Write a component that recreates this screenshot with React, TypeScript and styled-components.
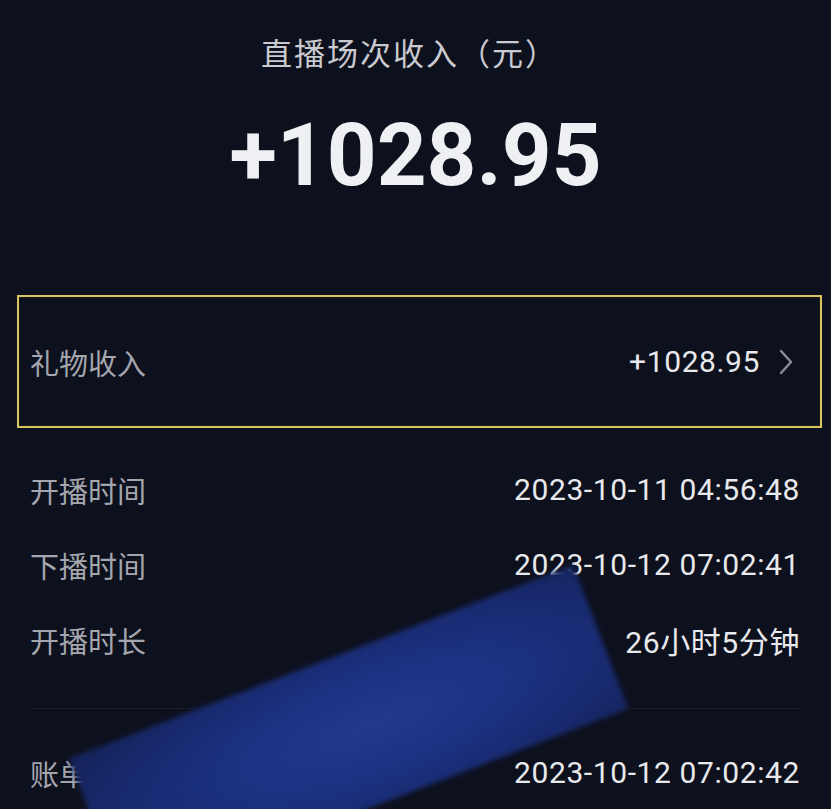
import React from 'react';
import styled, { createGlobalStyle } from 'styled-components';

const GlobalStyle = createGlobalStyle`
  html, body {
    margin: 0;
    padding: 0;
    background: #0d101d;
  }
  body {
    font-family: Roboto, "Noto Sans CJK SC", sans-serif;
  }
`;

const Page = styled.div`
  position: relative;
  width: 831px;
  height: 809px;
  overflow: hidden;
  background: #0d101d;
  padding: 0 9px 0 17px;
  box-sizing: border-box;
`;

const Header = styled.div`
  display: flex;
  flex-direction: column;
  align-items: center;
  padding: 31px 8px 0 0;
`;

const Title = styled.div`
  font-family: "Noto Sans CJK SC", sans-serif;
  font-size: 31px;
  line-height: 42px;
  color: #c9cad0;
  letter-spacing: 2px;
  margin-right: 12px;
`;

const Amount = styled.div`
  margin-top: 32px;
  font-family: Roboto, sans-serif;
  font-weight: 700;
  font-size: 87px;
  line-height: 100px;
  color: #eef0f3;
  letter-spacing: 0;
`;

const GiftBox = styled.div`
  margin-top: 90px;
  height: 133px;
  box-sizing: border-box;
  border: 2px solid #d8c460;
  box-shadow: inset 0 0 0 1px #1a1a12;
  display: flex;
  align-items: center;
  justify-content: space-between;
  padding: 0 26px 0 11px;
`;

const Label = styled.span`
  font-family: "Noto Sans CJK SC", sans-serif;
  font-size: 29px;
  color: #a4a6ae;
`;

const Value = styled.span`
  font-family: Roboto, "Noto Sans CJK SC", sans-serif;
  font-size: 30px;
  color: #e8e9ec;
  letter-spacing: 0.6px;
`;

const ValueGroup = styled.div`
  display: flex;
  align-items: center;
  gap: 18px;
`;

const List = styled.div`
  margin-top: 24px;
  padding: 0 22px 0 13px;
`;

const Row = styled.div<{ $gap?: number }>`
  height: 75px;
  display: flex;
  align-items: center;
  justify-content: space-between;
  margin-top: ${(p) => p.$gap ?? 0}px;
`;

const Divider = styled.div`
  margin-top: 31px;
  height: 1px;
  background: #181c2b;
`;

const Smudge = styled.div`
  position: absolute;
  left: ${573 - 540}px;
  top: 565px;
  width: 540px;
  height: 154px;
  transform-origin: top right;
  transform: rotate(-21deg);
  background: radial-gradient(ellipse 65% 75% at 55% 50%, #213a8e 0%, #1c3282 40%, #182a70 75%, #15245c 100%);
  filter: blur(2.5px);
`;

const Chevron = () => (
  <svg width="16" height="28" viewBox="0 0 16 28" fill="none">
    <polyline points="3,3 13,14 3,25" stroke="#8b8e97" strokeWidth="2.4" strokeLinecap="round" strokeLinejoin="round" />
  </svg>
);

const rows = [
  { label: '开播时间', value: '2023-10-11 04:56:48' },
  { label: '下播时间', value: '2023-10-12 07:02:41' },
  { label: '开播时长', value: '26小时5分钟' },
];

export default function App() {
  return (
    <>
      <GlobalStyle />
      <Page>
        <Header>
          <Title>直播场次收入（元）</Title>
          <Amount>+1028.95</Amount>
        </Header>
        <GiftBox>
          <Label>礼物收入</Label>
          <ValueGroup>
            <Value>+1028.95</Value>
            <Chevron />
          </ValueGroup>
        </GiftBox>
        <List>
          {rows.map((r) => (
            <Row key={r.label}>
              <Label>{r.label}</Label>
              <Value>{r.value}</Value>
            </Row>
          ))}
          <Divider />
          <Row $gap={26}>
            <Label>账单时间</Label>
            <Value>2023-10-12 07:02:42</Value>
          </Row>
        </List>
        <Smudge />
      </Page>
    </>
  );
}
